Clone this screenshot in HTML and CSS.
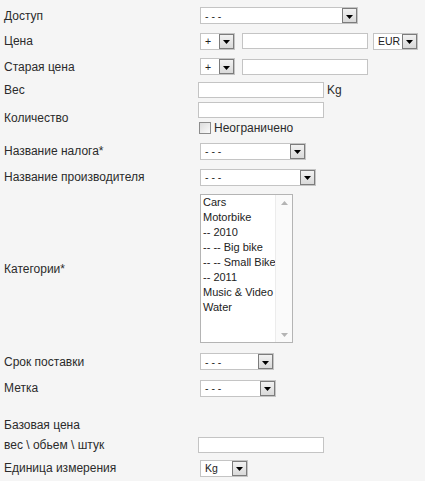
FILE: index.html
```html
<!DOCTYPE html>
<html lang="ru">
<head>
<meta charset="utf-8">
<title>Товар</title>
<link rel="stylesheet" href="styles.css">
</head>
<body>
<div class="form">
  <div class="row h25">
    <div class="label">Доступ</div>
    <div class="ctrl"><div class="select w158"><span class="val">- - -</span><span class="btn"><svg width="7" height="4" viewBox="0 0 7 4"><polygon points="0,0 7,0 3.5,4" fill="#000"/></svg></span></div></div>
  </div>
  <div class="row h26">
    <div class="label">Цена</div>
    <div class="ctrl">
      <div class="select w35"><span class="val">+</span><span class="btn"><svg width="7" height="4" viewBox="0 0 7 4"><polygon points="0,0 7,0 3.5,4" fill="#000"/></svg></span></div>
      <div class="input w126 ml7"></div>
      <div class="select w45 ml5"><span class="val">EUR</span><span class="btn"><svg width="7" height="4" viewBox="0 0 7 4"><polygon points="0,0 7,0 3.5,4" fill="#000"/></svg></span></div>
    </div>
  </div>
  <div class="row h25">
    <div class="label">Старая цена</div>
    <div class="ctrl">
      <div class="select w35"><span class="val">+</span><span class="btn"><svg width="7" height="4" viewBox="0 0 7 4"><polygon points="0,0 7,0 3.5,4" fill="#000"/></svg></span></div>
      <div class="input w126 ml7"></div>
    </div>
  </div>
  <div class="row h21">
    <div class="label">Вес</div>
    <div class="ctrl"><div class="input w126 flush"></div><span class="unit">Kg</span></div>
  </div>
  <div class="row h38 top">
    <div class="label qty">Количество</div>
    <div class="ctrl col">
      <div class="input w126 flush"></div>
      <label class="check"><span class="box"></span><span>Неограничено</span></label>
    </div>
  </div>
  <div class="row h26">
    <div class="label">Название налога*</div>
    <div class="ctrl"><div class="select w106"><span class="val">- - -</span><span class="btn"><svg width="7" height="4" viewBox="0 0 7 4"><polygon points="0,0 7,0 3.5,4" fill="#000"/></svg></span></div></div>
  </div>
  <div class="row h26">
    <div class="label">Название производителя</div>
    <div class="ctrl"><div class="select w116"><span class="val">- - -</span><span class="btn"><svg width="7" height="4" viewBox="0 0 7 4"><polygon points="0,0 7,0 3.5,4" fill="#000"/></svg></span></div></div>
  </div>
  <div class="row h157">
    <div class="label">Категории*</div>
    <div class="ctrl">
      <div class="listbox">
        <ul class="items">
          <li>Cars</li>
          <li>Motorbike</li>
          <li>-- 2010</li>
          <li>-- -- Big bike</li>
          <li>-- -- Small Bike</li>
          <li>-- 2011</li>
          <li>Music &amp; Video</li>
          <li>Water</li>
        </ul>
        <div class="scroll">
          <svg width="7" height="4" viewBox="0 0 7 4"><polygon points="3.5,0 7,4 0,4" fill="#b4b4b4"/></svg>
          <svg width="7" height="4" viewBox="0 0 7 4"><polygon points="0,0 7,0 3.5,4" fill="#b4b4b4"/></svg>
        </div>
      </div>
    </div>
  </div>
  <div class="row h29">
    <div class="label">Срок поставки</div>
    <div class="ctrl"><div class="select w74"><span class="val">- - -</span><span class="btn"><svg width="7" height="4" viewBox="0 0 7 4"><polygon points="0,0 7,0 3.5,4" fill="#000"/></svg></span></div></div>
  </div>
  <div class="row h24">
    <div class="label">Метка</div>
    <div class="ctrl"><div class="select w76"><span class="val">- - -</span><span class="btn"><svg width="7" height="4" viewBox="0 0 7 4"><polygon points="0,0 7,0 3.5,4" fill="#000"/></svg></span></div></div>
  </div>
  <div class="row h35 bottom">
    <div class="label">Базовая цена</div>
    <div class="ctrl"></div>
  </div>
  <div class="row h20">
    <div class="label">вес \ обьем \ штук</div>
    <div class="ctrl"><div class="input w126 flush"></div></div>
  </div>
  <div class="row h26">
    <div class="label">Единица измерения</div>
    <div class="ctrl"><div class="select w48"><span class="val">Kg</span><span class="btn"><svg width="7" height="4" viewBox="0 0 7 4"><polygon points="0,0 7,0 3.5,4" fill="#000"/></svg></span></div></div>
  </div>
</div>
</body>
</html>
```
FILE: styles.css
```css
html, body {
  margin: 0;
  padding: 0;
  background: #f5f5f5;
}
body {
  font-family: "Liberation Sans", Arial, sans-serif;
  font-size: 12px;
  color: #2b2b2b;
  width: 425px;
  height: 481px;
  overflow: hidden;
}
.form {
  padding-top: 3px;
}
.row {
  display: grid;
  grid-template-columns: 198px 1fr;
  align-items: center;
}
.row.top { align-items: start; }
.row.bottom { align-items: end; }
.h20 { height: 20px; }
.h21 { height: 21px; }
.h24 { height: 24px; }
.h25 { height: 25px; }
.h26 { height: 26px; }
.h29 { height: 29px; }
.h35 { height: 35px; }
.h38 { height: 38px; }
.h157 { height: 157px; }
.label {
  padding-left: 4px;
  line-height: 14px;
  white-space: nowrap;
}
.row.bottom .label { line-height: 20px; }
.label.qty { padding-top: 11px; }
.ctrl {
  display: flex;
  align-items: center;
}
.ctrl.col {
  flex-direction: column;
  align-items: flex-start;
  padding-top: 2px;
}
.select {
  box-sizing: border-box;
  height: 17px;
  margin-left: 2px;
  border: 1px solid #c4c4c4;
  background: #fff;
  display: flex;
  align-items: center;
  justify-content: space-between;
  font-size: 10.5px;
  color: #222;
}
.select .val {
  padding-left: 4px;
  padding-right: 2px;
  white-space: nowrap;
}
.btn {
  box-sizing: border-box;
  flex: none;
  width: 15px;
  height: 15px;
  border: 1px solid #7c7c7c;
  background: linear-gradient(#f2f2f2, #d9d9d9);
  display: flex;
  align-items: center;
  justify-content: center;
  padding-top: 2px;
}
.btn svg { display: block; }
.input {
  box-sizing: border-box;
  height: 16px;
  border: 1px solid #c4c4c4;
  background: #fff;
}
.input.flush { margin-left: 0; }
.w35 { width: 35px; }
.w45 { width: 45px; }
.w48 { width: 48px; }
.w74 { width: 74px; }
.w76 { width: 76px; }
.w106 { width: 106px; }
.w116 { width: 116px; }
.w126 { width: 126px; }
.w158 { width: 158px; }
.ml7 { margin-left: 7px; }
.ml5 { margin-left: 5px; }
.unit {
  margin-left: 3px;
  line-height: 14px;
}
.check {
  display: flex;
  align-items: center;
  margin-top: 3px;
  margin-left: 1px;
  line-height: 14px;
}
.check .box {
  box-sizing: border-box;
  width: 12px;
  height: 12px;
  border: 1px solid #8c8c8c;
  background: linear-gradient(135deg, #dcdcdc, #fafafa);
  margin-right: 3px;
}
.listbox {
  box-sizing: border-box;
  width: 93px;
  height: 149px;
  margin-left: 2px;
  border: 1px solid #b4b4b4;
  background: #fff;
  display: flex;
}
.items {
  list-style: none;
  margin: 0;
  padding: 0 0 0 2px;
  flex: 1;
  font-size: 11px;
  line-height: 15px;
  color: #222;
  white-space: nowrap;
  overflow: hidden;
}
.scroll {
  width: 16px;
  border-left: 1px solid #ececec;
  background: #fafafa;
  display: flex;
  flex-direction: column;
  justify-content: space-between;
  align-items: center;
  padding: 6px 0 5px;
}
.scroll svg { display: block; }
```
